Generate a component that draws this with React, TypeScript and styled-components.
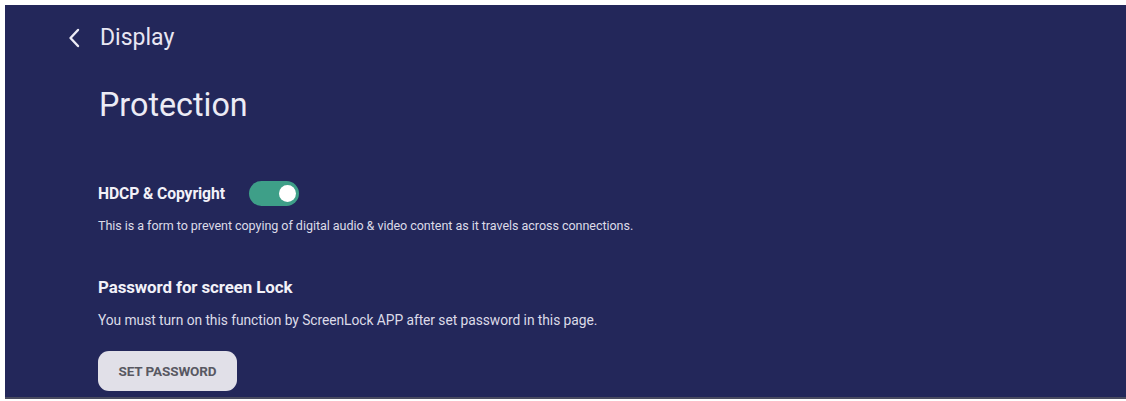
import React from "react";
import styled, { createGlobalStyle } from "styled-components";

const Global = createGlobalStyle`
  html, body { margin: 0; padding: 0; background: #ffffff; }
  body { font-family: Roboto, "Noto Sans", Arial, sans-serif; }
`;

const Screen = styled.div`
  margin: 5px 0 0 5px;
  width: 1121px;
  height: 394px;
  background: #23275a;
  border-bottom: 2px solid #4a4c60;
  box-sizing: border-box;
  padding: 22px 0 0 63px;
  display: flex;
  flex-direction: column;
  color: #eceaf4;
  overflow: hidden;
`;

const Header = styled.div`
  display: flex;
  align-items: center;
  gap: 20px;
  height: 22px;
`;

const BackIcon = styled.svg`
  width: 12px;
  height: 20px;
  display: block;
`;

const HeaderTitle = styled.span`
  font-size: 23px;
  line-height: 22px;
  font-weight: 400;
  color: #e8e6f2;
`;

const Content = styled.div`
  padding-left: 30px;
  display: flex;
  flex-direction: column;
`;

const PageTitle = styled.h1`
  margin: 38px 0 0 1px;
  font-size: 32.3px;
  line-height: 36px;
  font-weight: 400;
  color: #ecebf5;
`;

const Section = styled.section<{ $top: number }>`
  margin-top: ${(p) => p.$top}px;
  display: flex;
  flex-direction: column;
`;

const TitleRow = styled.div`
  display: flex;
  align-items: center;
  gap: 24px;
  height: 26px;
`;

const ItemTitle = styled.span<{ $size: number }>`
  font-size: ${(p) => p.$size}px;
  font-weight: 700;
  letter-spacing: -0.1px;
  color: #f2f1f8;
`;

const Desc = styled.p<{ $size: number }>`
  margin: 12px 0 0;
  font-size: ${(p) => p.$size}px;
  line-height: 16px;
  letter-spacing: -0.05px;
  color: #dcdbe8;
`;

const Toggle = styled.div`
  width: 50px;
  height: 25px;
  border-radius: 13px;
  background: #3e9f88;
  position: relative;
  flex: none;
`;

const Knob = styled.div`
  position: absolute;
  right: 3px;
  top: 4px;
  width: 17px;
  height: 17px;
  border-radius: 50%;
  background: #ffffff;
`;

const Button = styled.button`
  margin-top: 23px;
  width: 139px;
  height: 40px;
  border: none;
  border-radius: 11px;
  background: #e1e0e8;
  color: #585862;
  font-family: Roboto, "Noto Sans", Arial, sans-serif;
  font-size: 13.5px;
  font-weight: 700;
  letter-spacing: -0.1px;
  padding: 0;
`;

export default function App() {
  return (
    <>
      <Global />
      <Screen>
        <Header>
          <BackIcon viewBox="0 0 12 20">
            <polyline
              points="10,2 2.5,10 10,18"
              fill="none"
              stroke="#ecebf5"
              strokeWidth="2.4"
              strokeLinecap="round"
              strokeLinejoin="round"
            />
          </BackIcon>
          <HeaderTitle>Display</HeaderTitle>
        </Header>
        <Content>
          <PageTitle>Protection</PageTitle>
          <Section $top={57}>
            <TitleRow>
              <ItemTitle $size={15.7}>HDCP &amp; Copyright</ItemTitle>
              <Toggle>
                <Knob />
              </Toggle>
            </TitleRow>
            <Desc $size={12.55}>
              This is a form to prevent copying of digital audio &amp; video content as it travels across connections.
            </Desc>
          </Section>
          <Section $top={40}>
            <TitleRow>
              <ItemTitle $size={16.9}>Password for screen Lock</ItemTitle>
            </TitleRow>
            <Desc $size={13.8}>
              You must turn on this function by ScreenLock APP after set password in this page.
            </Desc>
            <Button>SET PASSWORD</Button>
          </Section>
        </Content>
      </Screen>
    </>
  );
}
